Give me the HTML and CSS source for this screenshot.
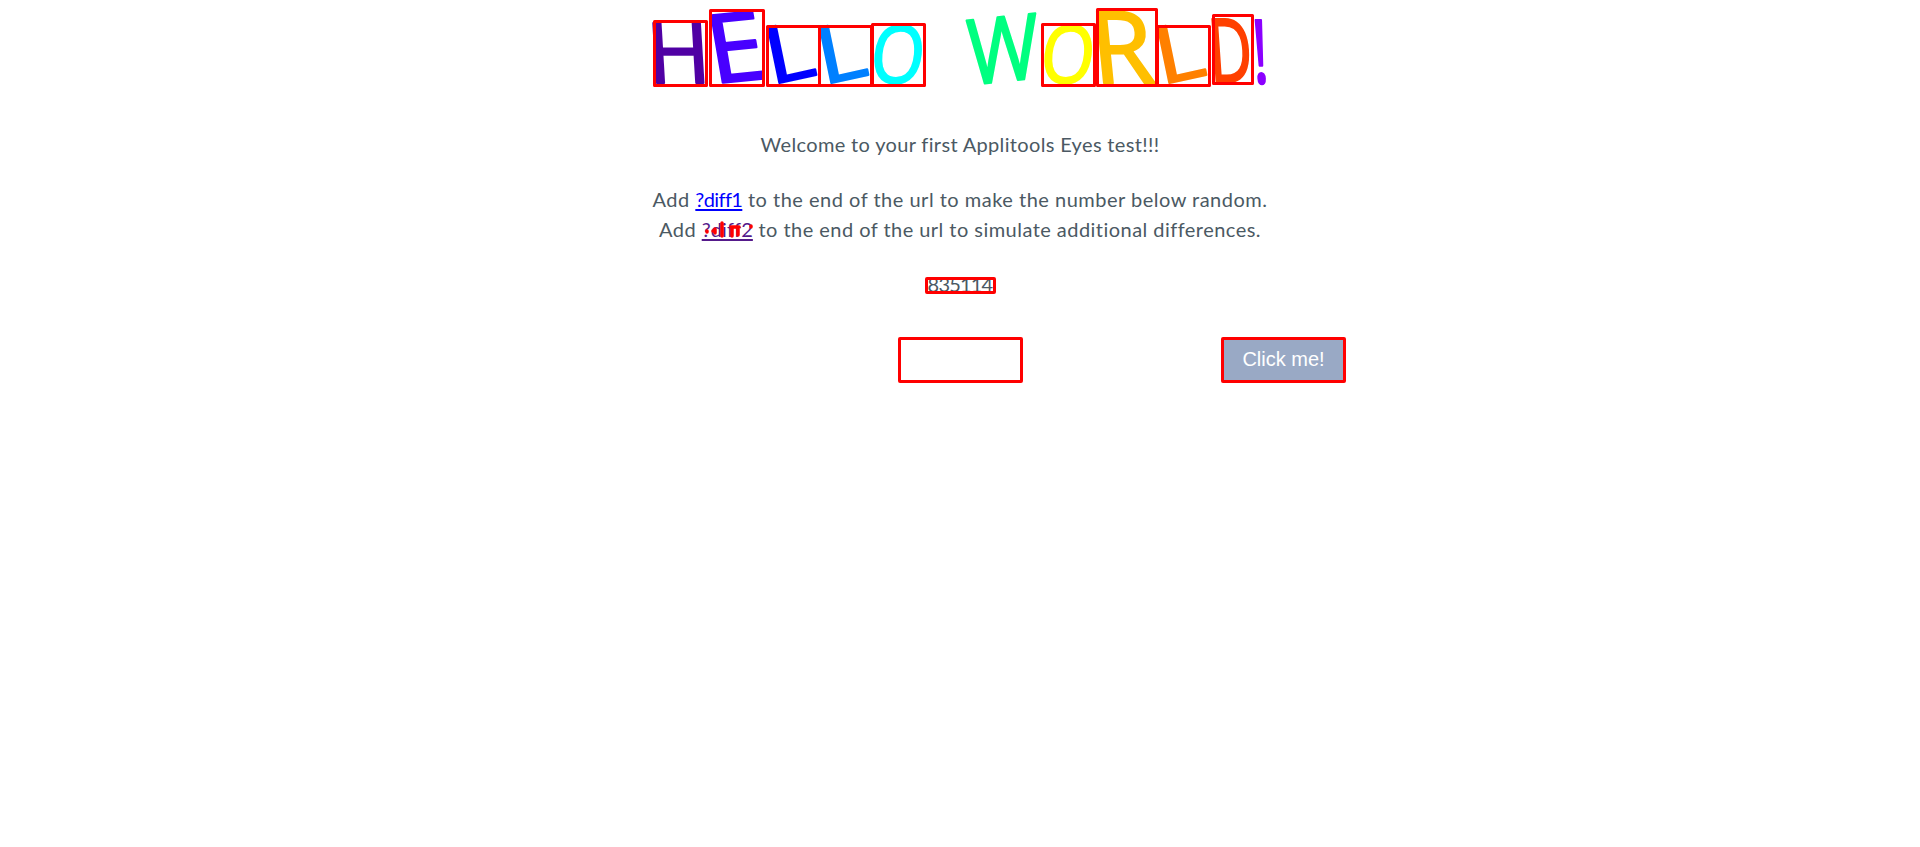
FILE: index.html
```html
<!DOCTYPE html>
<html lang="en">
<head>
<meta charset="utf-8">
<title>Hello World!</title>
<link rel="stylesheet" href="styles.css">
</head>
<body>
<main class="page">
  <svg class="title" viewBox="640 0 640 100" role="img" aria-label="Hello World!">
    <g class="letters">
      <text class="c1" transform="matrix(.86 0 .05 .84 648.5 83)">H</text>
      <text class="c2" transform="matrix(1.02 -.1 .16 .94 713 83.5)">E</text>
      <text class="c3" transform="matrix(.92 -.2 .16 .78 770.5 85)">L</text>
      <text class="c4" transform="matrix(.92 -.2 .16 .78 822.5 85)">L</text>
      <text class="c5" transform="matrix(.69 0 -.08 .8 868.5 83)">O</text>
      <text class="c6" transform="matrix(.77 -.08 .05 .9 969 85)">W</text>
      <text class="c7" transform="matrix(.69 0 -.08 .8 1038.5 83)">O</text>
      <text class="c8" transform="matrix(1 0 .1 1 1094.5 83)">R</text>
      <text class="c9" transform="matrix(.92 -.2 .16 .78 1160.5 85)">L</text>
      <text class="c10" transform="matrix(.6 0 .06 .88 1210.5 81.5)">D</text>
      <text class="c11" transform="matrix(.6 0 .05 .88 1254 83)">!</text>
    </g>
    <g class="marks">
      <rect x="654.5" y="21.5" width="52" height="64"/>
      <rect x="710.5" y="10.5" width="53" height="75"/>
      <rect x="767.5" y="26.5" width="52" height="59"/>
      <rect x="819.5" y="26.5" width="52" height="59"/>
      <rect x="872.5" y="24.5" width="52" height="61"/>
      <rect x="1042.5" y="24.5" width="52" height="61"/>
      <rect x="1097.5" y="9.5" width="59" height="76"/>
      <rect x="1157.5" y="26.5" width="52" height="59"/>
      <rect x="1213.5" y="15.5" width="39" height="68"/>
    </g>
  </svg>
  <p class="line welcome">Welcome to your first Applitools Eyes test!!!</p>
  <p class="line first">Add <a class="link" href="#">?diff1</a> to the end of the url to make the number below random.</p>
  <p class="line second">Add <a class="link visited" href="#">?diff2<svg class="scribble" viewBox="703 222 51 17"><path d="M708 232v1"/><path d="M714 232h1M716 230v4"/><path d="M723 224v13"/><path d="M733 228v9M739 228v8M732 228h8"/><path d="M752 227v1"/></svg></a> to the end of the url to simulate additional differences.</p>
  <p class="line number"><span class="frame">835114</span></p>
  <div class="actions">
    <div class="box"></div>
    <button class="box button">Click me!</button>
  </div>
</main>
</body>
</html>
```
FILE: styles.css
```css
body {
  margin: 0;
  background: #fff;
  color: #4b5963;
  font-family: Lato, sans-serif;
  font-size: 20px;
}
.page {
  display: flex;
  flex-direction: column;
  align-items: center;
}
.title {
  width: 640px;
  height: 100px;
  display: block;
  overflow: visible;
}
.letters {
  font-family: "Open Sans", sans-serif;
  font-size: 100px;
  stroke-width: 2.5;
  stroke-linejoin: round;
}
.c1 { fill: #5000a4; stroke: #5000a4; }
.c2 { fill: #4800ff; stroke: #4800ff; }
.c3 { fill: #0000ff; stroke: #0000ff; }
.c4 { fill: #0080ff; stroke: #0080ff; }
.c5 { fill: #00ffff; stroke: #00ffff; }
.c6 { fill: #00ff80; stroke: #00ff80; }
.c7 { fill: #ffff00; stroke: #ffff00; }
.c8 { fill: #ffbf00; stroke: #ffbf00; }
.c9 { fill: #ff8000; stroke: #ff8000; }
.c10 { fill: #ff4000; stroke: #ff4000; }
.c11 { fill: #8b00ff; stroke: #8b00ff; }
.marks {
  fill: none;
  stroke: #f00;
  stroke-width: 3;
  stroke-linejoin: round;
}
.line {
  margin: 0;
  line-height: 30px;
  white-space: nowrap;
}
.welcome {
  margin-top: 29px;
  letter-spacing: 0.34px;
}
.first {
  margin-top: 25px;
  letter-spacing: 0.5px;
}
.second {
  letter-spacing: 0.46px;
}
.link {
  color: #00f;
  position: relative;
  letter-spacing: -0.6px;
  text-underline-offset: 2px;
  text-decoration-thickness: 2px;
  text-decoration-skip-ink: none;
}
.visited {
  color: #551a8b;
  letter-spacing: 0.1px;
}
.scribble {
  position: absolute;
  left: 0;
  top: 4px;
  width: 51px;
  height: 17px;
  fill: none;
  stroke: #f00;
  stroke-width: 3.5;
  stroke-linecap: round;
  overflow: visible;
}
.number {
  margin-top: 25px;
  letter-spacing: -0.8px;
}
.frame {
  position: relative;
}
.frame::after {
  content: "";
  position: absolute;
  left: -3px;
  right: -4px;
  top: 5px;
  height: 11px;
  border: 3px solid #f00;
  border-radius: 2px;
}
.actions {
  display: grid;
  grid-template-columns: 125px 125px;
  column-gap: 198px;
  width: 448px;
  margin: 38px 0 0 324px;
}
.box {
  box-sizing: border-box;
  height: 46px;
  border: 3px solid #f00;
  border-radius: 2px;
}
.button {
  padding: 0 0 2px;
  background: #99a9c5;
  color: #fff;
  font: 20px "Liberation Sans", Arial, sans-serif;
}
```
